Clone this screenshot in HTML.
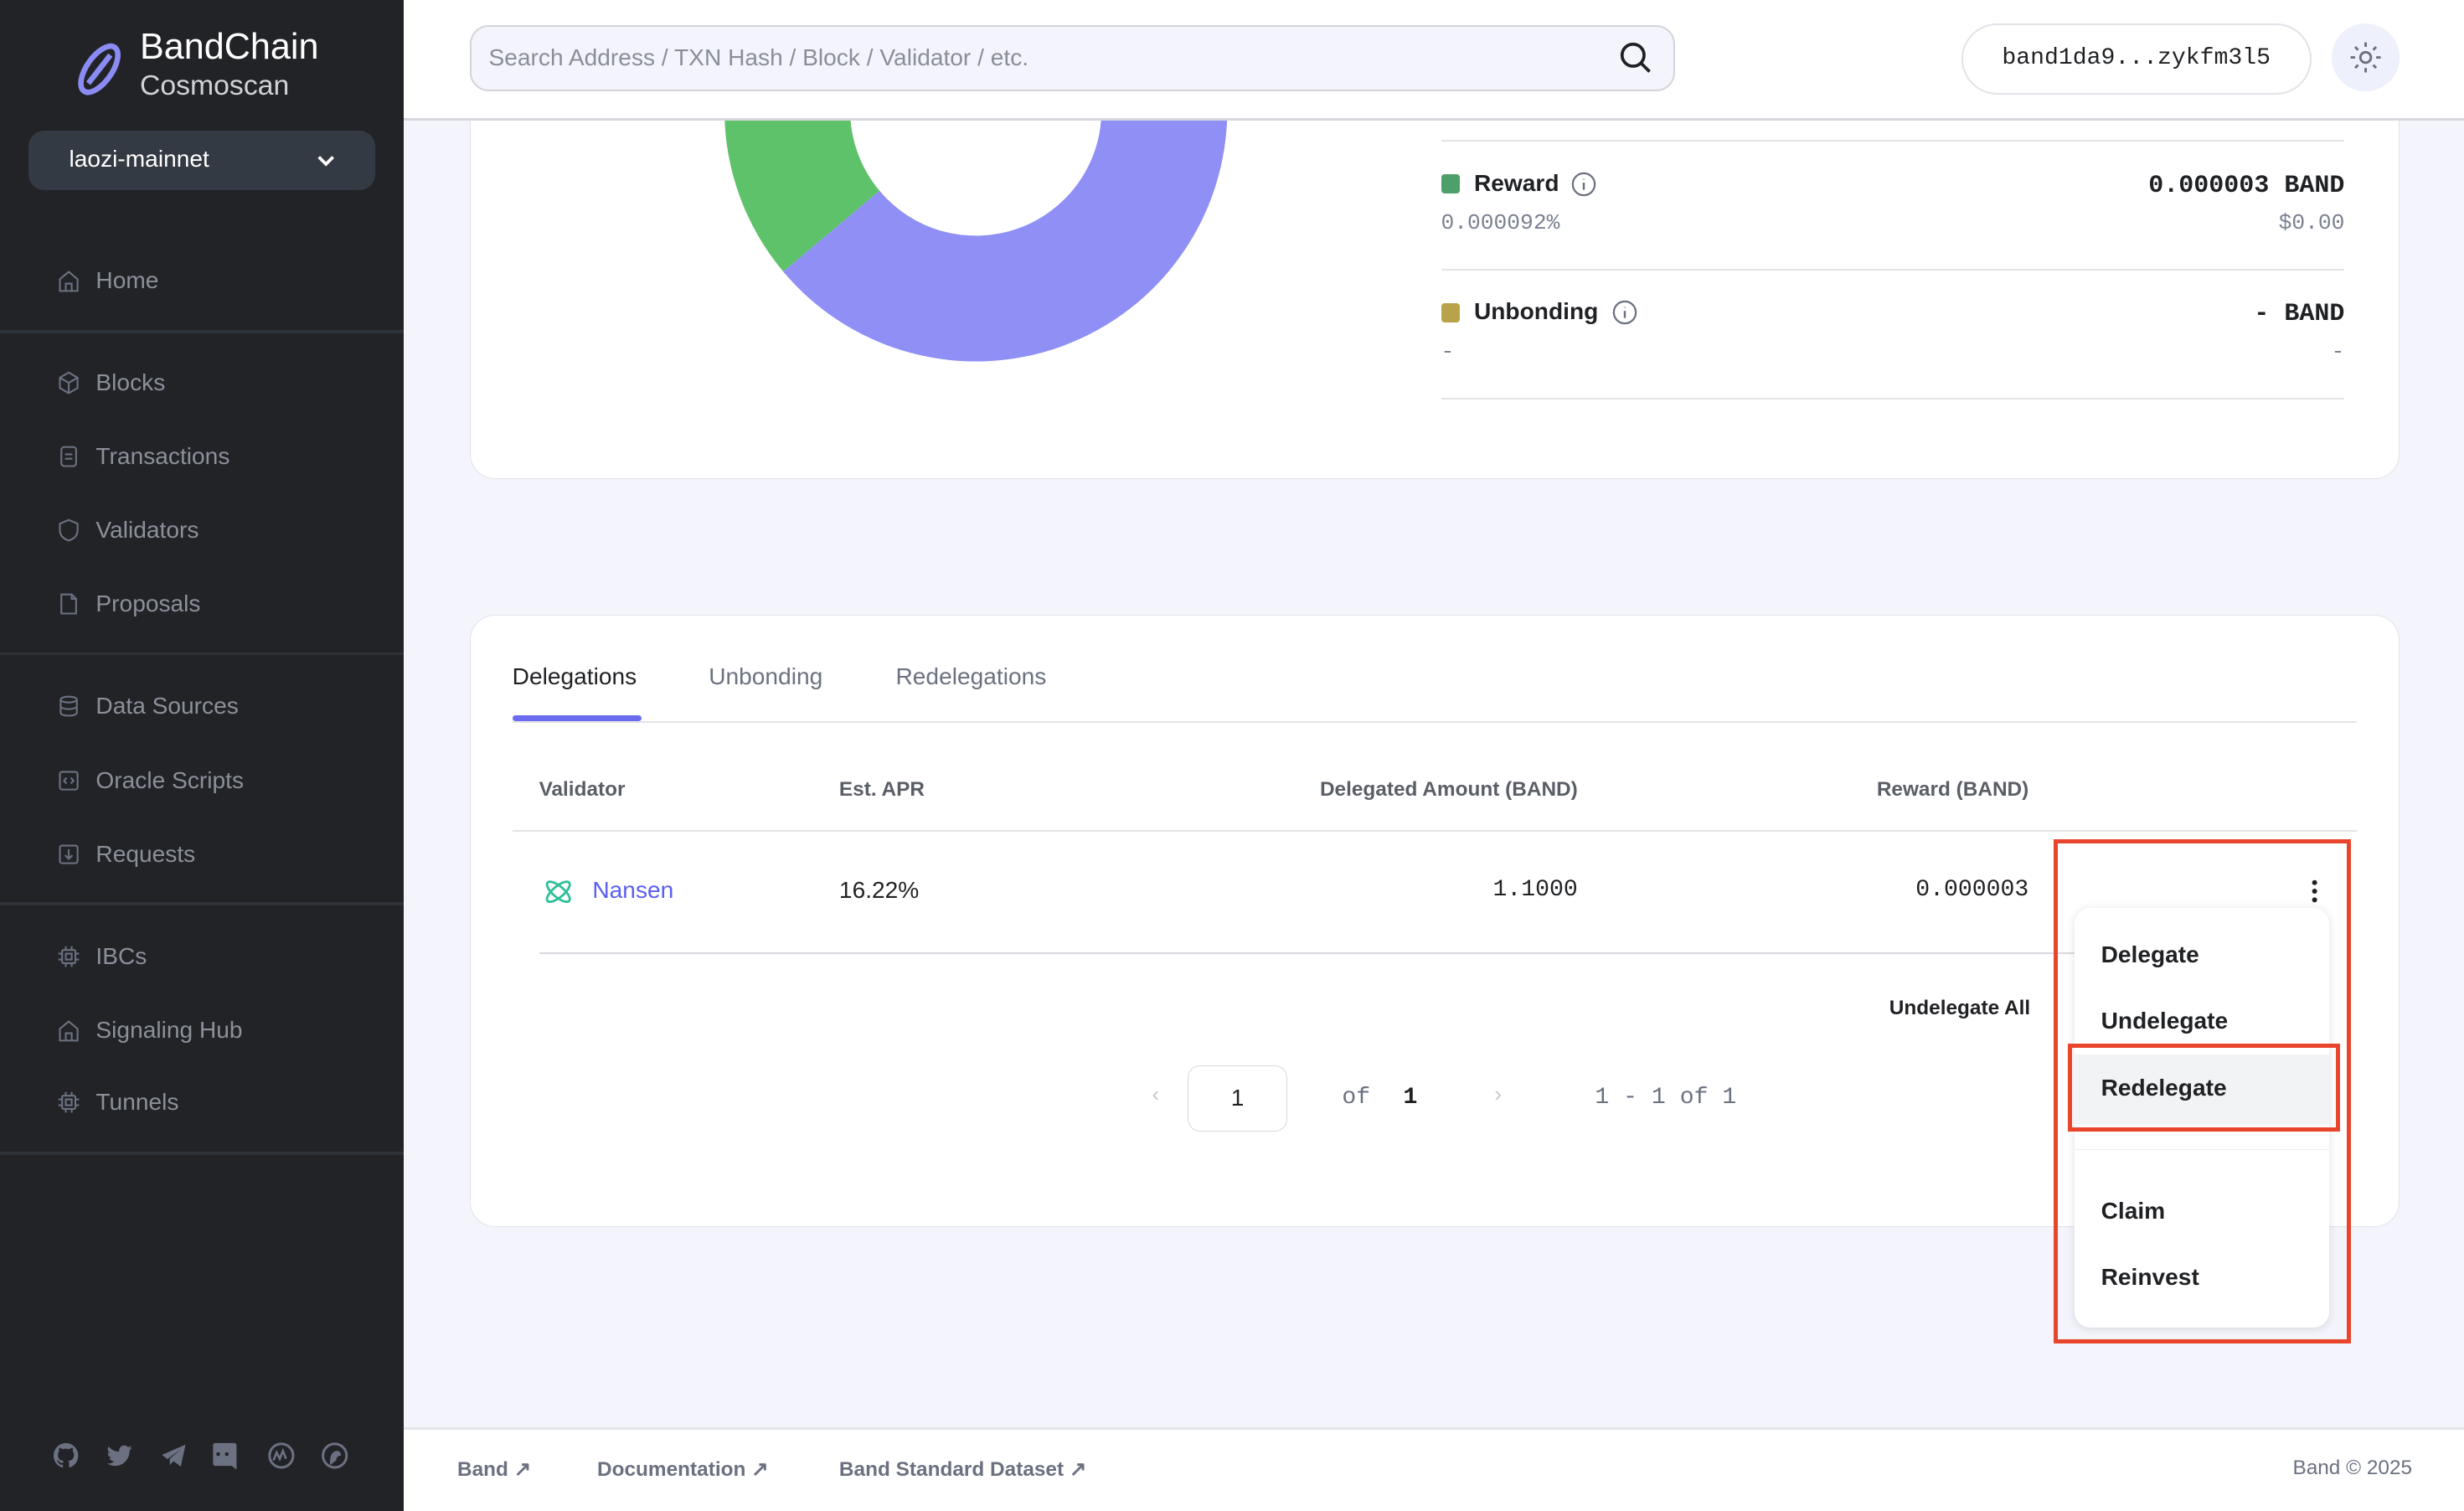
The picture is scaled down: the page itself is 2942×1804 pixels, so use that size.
<!DOCTYPE html>
<html><head><meta charset="utf-8">
<style>
*{box-sizing:border-box;margin:0;padding:0}
html,body{width:2942px;height:1804px;overflow:hidden;background:#f4f5fc}
#r{zoom:1.87628;width:1568px;height:961.5px;position:relative;font-family:"Liberation Sans",sans-serif;background:#f4f5fc;overflow:hidden}
.a{position:absolute;white-space:nowrap}
.mono{font-family:"Liberation Mono",monospace}
.sb{position:absolute;left:0;top:0;width:257px;height:962px;background:#222327}
.nav{position:absolute;left:36px;font-size:15px;color:#8b909a;display:flex;align-items:center;gap:10px}
.nav svg{width:15px;height:15px}
.div{position:absolute;left:0;width:257px;height:2px;background:#2d3138}
.card{position:absolute;background:#fff;border:1px solid #e2e3e8;border-radius:16px}
.hl{position:absolute;height:1px;background:#e3e4e8}
.th{font-size:13px;font-weight:bold;color:#5a5e66}
.dd{font-size:15px;color:#1f2124;font-weight:bold}
.fl{font-size:13px;color:#6b7180;font-weight:bold}
</style></head><body><div id="r">

<div class="card" style="left:299px;top:-40px;width:1228px;height:345px"></div>
<svg class="a" style="left:0;top:0" width="1568" height="320" viewBox="0 0 1568 320">
<g transform="translate(621,70)">
<path d="M-160,0 A160,160 0 0 0 -122.6,102.8 L-61.3,51.4 A80,80 0 0 1 -80,0 Z" fill="#5ec26a"/>
<path d="M-122.6,102.8 A160,160 0 0 0 160,0 L80,0 A80,80 0 0 1 -61.3,51.4 Z" fill="#8f8ff6"/>
</g></svg>
<div class="hl" style="left:917px;top:89px;width:575px"></div>
<div class="hl" style="left:917px;top:171px;width:575px"></div>
<div class="hl" style="left:917px;top:253px;width:575px"></div>
<div class="a" style="left:917px;top:111px;width:12px;height:12px;background:#4f9f6a;border-radius:2px"></div>
<div class="a" style="left:938px;top:108px;font-size:15px;font-weight:bold;color:#1f2124">Reward</div>
<svg class="a" style="left:1000px;top:109px" width="16" height="16" viewBox="0 0 16 16"><circle cx="8" cy="8" r="7" fill="none" stroke="#6b7180" stroke-width="1.2"/><path d="M8 7v4.5M8 4.6v.4" stroke="#6b7180" stroke-width="1.3"/></svg>
<div class="a mono" style="right:76px;top:109px;font-size:16px;font-weight:bold;color:#1f2124">0.000003 BAND</div>
<div class="a mono" style="left:917px;top:134px;font-size:14px;color:#7b8190">0.000092%</div>
<div class="a mono" style="right:76px;top:134px;font-size:14px;color:#7b8190">$0.00</div>
<div class="a" style="left:917px;top:193px;width:12px;height:12px;background:#b8a24a;border-radius:2px"></div>
<div class="a" style="left:938px;top:190px;font-size:15px;font-weight:bold;color:#1f2124">Unbonding</div>
<svg class="a" style="left:1026px;top:191px" width="16" height="16" viewBox="0 0 16 16"><circle cx="8" cy="8" r="7" fill="none" stroke="#6b7180" stroke-width="1.2"/><path d="M8 7v4.5M8 4.6v.4" stroke="#6b7180" stroke-width="1.3"/></svg>
<div class="a mono" style="right:76px;top:191px;font-size:16px;font-weight:bold;color:#1f2124">- BAND</div>
<div class="a mono" style="left:917px;top:216px;font-size:14px;color:#7b8190">-</div>
<div class="a mono" style="right:76px;top:216px;font-size:14px;color:#7b8190">-</div>

<!-- header -->
<div class="a" style="left:257px;top:0;width:1311px;height:77px;background:#fff;border-bottom:2px solid #d5d8dd"></div>
<div class="a" style="left:299px;top:16px;width:767px;height:42px;background:#f4f5fc;border:1.5px solid #d3d5da;border-radius:12px"></div>
<div class="a" style="left:311px;top:28px;font-size:15px;color:#8a8e96">Search Address / TXN Hash / Block / Validator / etc.</div>
<svg class="a" style="left:1030px;top:26px" width="21" height="21" viewBox="0 0 21 21"><circle cx="9" cy="9" r="7" fill="none" stroke="#1f2124" stroke-width="2"/><path d="M14 14l5.5 5.5" stroke="#1f2124" stroke-width="2"/></svg>
<div class="a" style="left:1248px;top:15px;width:223px;height:45px;background:#fff;border:1.5px solid #e2e3e8;border-radius:23px"></div>
<div class="a mono" style="left:1274px;top:29px;font-size:15px;color:#1f2124">band1da9...zykfm3l5</div>
<div class="a" style="left:1484px;top:15px;width:43px;height:43px;background:#eef0fb;border-radius:50%"></div>
<svg class="a" style="left:1494px;top:25px" width="23" height="23" viewBox="0 0 24 24" fill="none" stroke="#6b7180" stroke-width="1.6"><circle cx="12" cy="12" r="3.5"/><path d="M12 2v3M12 19v3M2 12h3M19 12h3M5 5l2 2M17 17l2 2M5 19l2-2M17 7l2-2"/></svg>

<!-- sidebar -->
<div class="sb"></div>
<svg class="a" style="left:44px;top:25px" width="38" height="38" viewBox="0 0 38 38" fill="none" stroke="#8a8cf4" stroke-width="3.5"><ellipse cx="19" cy="19" rx="8" ry="17" transform="rotate(35 19 19)"/><path d="M12 28 L26 10"/></svg>
<div class="a" style="left:89px;top:17px;font-size:23px;color:#fff">BandChain</div>
<div class="a" style="left:89px;top:44px;font-size:18px;color:#d0d2d6">Cosmoscan</div>
<div class="a" style="left:18px;top:83px;width:221px;height:38px;background:#343a43;border-radius:10px"></div>
<div class="a" style="left:44px;top:93px;font-size:15px;color:#fff">laozi-mainnet</div>
<svg class="a" style="left:201px;top:96px" width="13" height="13" viewBox="0 0 13 13"><path d="M2 4l4.5 4.5L11 4" fill="none" stroke="#fff" stroke-width="2"/></svg>

<div class="nav" style="top:170px"><svg viewBox="0 0 16 16" fill="none" stroke="#6b7180" stroke-width="1.2"><path d="M2 7l6-5 6 5v8H2z M6 15v-5h4v5"/></svg>Home</div>
<div class="div" style="top:210px"></div>
<div class="nav" style="top:235px"><svg viewBox="0 0 16 16" fill="none" stroke="#6b7180" stroke-width="1.2"><path d="M8 1l6 3.5v7L8 15l-6-3.5v-7z M2 4.5L8 8l6-3.5 M8 8v7"/></svg>Blocks</div>
<div class="nav" style="top:282px"><svg viewBox="0 0 16 16" fill="none" stroke="#6b7180" stroke-width="1.2"><rect x="3" y="1.5" width="10" height="13" rx="2"/><path d="M5.5 6.5h5M5.5 9.5h5"/></svg>Transactions</div>
<div class="nav" style="top:329px"><svg viewBox="0 0 16 16" fill="none" stroke="#6b7180" stroke-width="1.2"><path d="M8 1l6 2.5v4.5c0 4-3 6-6 7-3-1-6-3-6-7V3.5z"/></svg>Validators</div>
<div class="nav" style="top:376px"><svg viewBox="0 0 16 16" fill="none" stroke="#6b7180" stroke-width="1.2"><path d="M3 1.5h7l3 3v10H3z M10 1.5v3h3"/></svg>Proposals</div>
<div class="div" style="top:415px"></div>
<div class="nav" style="top:441px"><svg viewBox="0 0 16 16" fill="none" stroke="#6b7180" stroke-width="1.2"><ellipse cx="8" cy="3.5" rx="5.5" ry="2"/><path d="M2.5 3.5v9c0 1.1 2.5 2 5.5 2s5.5-.9 5.5-2v-9 M2.5 8c0 1.1 2.5 2 5.5 2s5.5-.9 5.5-2"/></svg>Data Sources</div>
<div class="nav" style="top:488px"><svg viewBox="0 0 16 16" fill="none" stroke="#6b7180" stroke-width="1.2"><rect x="2" y="2" width="12" height="12" rx="1.5"/><path d="M6.5 6L4.8 8l1.7 2M9.5 6l1.7 2-1.7 2"/></svg>Oracle Scripts</div>
<div class="nav" style="top:535px"><svg viewBox="0 0 16 16" fill="none" stroke="#6b7180" stroke-width="1.2"><rect x="2" y="2" width="12" height="12" rx="1.5"/><path d="M8 4.5v6M5.5 8.5L8 11l2.5-2.5"/></svg>Requests</div>
<div class="div" style="top:574px"></div>
<div class="nav" style="top:600px"><svg viewBox="0 0 16 16" fill="none" stroke="#6b7180" stroke-width="1.2"><rect x="3.5" y="3.5" width="9" height="9" rx="1"/><rect x="6" y="6" width="4" height="4"/><path d="M6 1v2.5M10 1v2.5M6 12.5V15M10 12.5V15M1 6h2.5M1 10h2.5M12.5 6H15M12.5 10H15"/></svg>IBCs</div>
<div class="nav" style="top:647px"><svg viewBox="0 0 16 16" fill="none" stroke="#6b7180" stroke-width="1.2"><path d="M2 7l6-5 6 5v8H2z M6 15v-5h4v5"/></svg>Signaling Hub</div>
<div class="nav" style="top:693px"><svg viewBox="0 0 16 16" fill="none" stroke="#6b7180" stroke-width="1.2"><rect x="3.5" y="3.5" width="9" height="9" rx="1"/><rect x="6" y="6" width="4" height="4"/><path d="M6 1v2.5M10 1v2.5M6 12.5V15M10 12.5V15M1 6h2.5M1 10h2.5M12.5 6H15M12.5 10H15"/></svg>Tunnels</div>
<div class="div" style="top:733px"></div>

<svg class="a" style="left:33px;top:917px" width="192" height="18" viewBox="0 0 192 18" fill="#6b7180">
<path d="M9 1a8 8 0 0 0-2.5 15.6c.4 0 .5-.2.5-.4v-1.5c-2.2.5-2.7-1-2.7-1-.4-.9-.9-1.2-.9-1.2-.7-.5.1-.5.1-.5.8.1 1.2.8 1.2.8.7 1.2 1.9.9 2.3.7.1-.5.3-.9.5-1.1-1.8-.2-3.7-.9-3.7-4 0-.9.3-1.6.8-2.2-.1-.2-.4-1 .1-2.1 0 0 .7-.2 2.2.8a7.6 7.6 0 0 1 4 0c1.5-1 2.2-.8 2.2-.8.4 1.1.2 1.9.1 2.1.5.6.8 1.3.8 2.2 0 3.1-1.9 3.8-3.7 4 .3.3.6.8.6 1.5v2.2c0 .2.1.5.6.4A8 8 0 0 0 9 1z"/>
<path d="M51 4c-.6.3-1.2.4-1.9.5.7-.4 1.2-1 1.4-1.8-.6.4-1.3.6-2.1.8a3.3 3.3 0 0 0-5.6 3A9.3 9.3 0 0 1 36 3.1a3.3 3.3 0 0 0 1 4.4c-.5 0-1-.2-1.5-.4 0 1.6 1.1 2.9 2.6 3.2-.5.1-1 .2-1.5.1.4 1.3 1.6 2.3 3.1 2.3A6.6 6.6 0 0 1 35 14c1.5.9 3.2 1.5 5 1.5 6.1 0 9.4-5 9.4-9.4v-.4c.7-.5 1.2-1.1 1.6-1.7z"/>
<path d="M70 8.5L85 2l-3 14-4.5-3.5-2.5 2.5v-4L82 5l-8.5 6.2z"/>
<path d="M104 1h12a1.5 1.5 0 0 1 1.5 1.5V18l-3-2.5H104a1.5 1.5 0 0 1-1.5-1.5V2.5A1.5 1.5 0 0 1 104 1zm3 7a1.2 1.2 0 1 0 0 .1zm5.5 0a1.2 1.2 0 1 0 0 .1z"/>
<circle cx="146" cy="9" r="7.5" fill="none" stroke="#6b7180" stroke-width="1.6"/><path d="M141 12l2-5 2 4 2-5 2 5" fill="none" stroke="#6b7180" stroke-width="1.4"/>
<circle cx="180" cy="9" r="7.5" fill="none" stroke="#6b7180" stroke-width="1.6"/><path d="M177 15c0-4 0-8 4-9 2 0 3 1 3 3-2 0-3 1-3 3z"/>
</svg>

<!-- card2 -->
<div class="card" style="left:299px;top:391px;width:1228px;height:390px"></div>
<div class="a" style="left:326px;top:422px;font-size:15px;color:#1f2124">Delegations</div>
<div class="a" style="left:451px;top:422px;font-size:15px;color:#6b7180">Unbonding</div>
<div class="a" style="left:570px;top:422px;font-size:15px;color:#6b7180">Redelegations</div>
<div class="hl" style="left:326px;top:459px;width:1174px"></div>
<div class="a" style="left:326px;top:455px;width:82px;height:4px;background:#6c6cf0;border-radius:2px"></div>
<div class="a th" style="left:343px;top:495px">Validator</div>
<div class="a th" style="left:534px;top:495px">Est. APR</div>
<div class="a th" style="right:564px;top:495px">Delegated Amount (BAND)</div>
<div class="a th" style="right:277px;top:495px">Reward (BAND)</div>
<div class="hl" style="left:326px;top:528px;width:1174px"></div>
<svg class="a" style="left:345px;top:557px" width="21" height="21" viewBox="0 0 21 21" fill="none" stroke="#2fbf9a" stroke-width="1.5"><ellipse cx="10.5" cy="10.5" rx="9" ry="3.5" transform="rotate(-40 10.5 10.5)"/><ellipse cx="10.5" cy="10.5" rx="9" ry="3.5" transform="rotate(40 10.5 10.5)"/></svg>
<div class="a" style="left:377px;top:558px;font-size:15px;color:#5a5ff0">Nansen</div>
<div class="a" style="left:534px;top:558px;font-size:15px;color:#1f2124">16.22%</div>
<div class="a mono" style="right:564px;top:558px;font-size:15px;color:#1f2124">1.1000</div>
<div class="a mono" style="right:277px;top:558px;font-size:15px;color:#1f2124">0.000003</div>
<svg class="a" style="left:1470px;top:559px" width="6" height="16"><circle cx="3" cy="2.5" r="1.6" fill="#1f2124"/><circle cx="3" cy="8" r="1.6" fill="#1f2124"/><circle cx="3" cy="13.5" r="1.6" fill="#1f2124"/></svg>
<div class="hl" style="left:343px;top:606px;width:980px;background:#d8dadf"></div>
<div class="a" style="right:276px;top:634px;font-size:13px;font-weight:bold;color:#1f2124">Undelegate All</div>
<div class="a" style="left:733px;top:688px;font-size:14px;color:#c5c8ce">‹</div>
<div class="a" style="left:756px;top:678px;width:63px;height:42px;border:1px solid #d6d8dd;border-radius:8px;font-size:15px;text-align:center;line-height:40px;color:#1f2124">1</div>
<div class="a mono" style="left:854px;top:690px;font-size:15px;color:#6b7180">of</div>
<div class="a mono" style="left:893px;top:690px;font-size:15px;font-weight:bold;color:#1f2124">1</div>
<div class="a" style="left:951px;top:688px;font-size:14px;color:#c5c8ce">›</div>
<div class="a mono" style="left:1015px;top:690px;font-size:15px;color:#6b7180">1 - 1 of 1</div>

<!-- dropdown -->
<div class="a" style="left:1320px;top:578px;width:162px;height:267px;background:#fff;border-radius:10px;box-shadow:0 1px 6px rgba(0,0,0,.12)"></div>
<div class="a" style="left:1320px;top:671px;width:162px;height:45px;background:#f2f3f5"></div>
<div class="a" style="left:1320px;top:731px;width:162px;height:1px;background:#eeeff1"></div>
<div class="a dd" style="left:1337px;top:599px">Delegate</div>
<div class="a dd" style="left:1337px;top:641px">Undelegate</div>
<div class="a dd" style="left:1337px;top:684px">Redelegate</div>
<div class="a dd" style="left:1337px;top:762px">Claim</div>
<div class="a dd" style="left:1337px;top:804px">Reinvest</div>
<div class="a" style="left:1307px;top:534px;width:189px;height:321px;border:3px solid #e8452c"></div>
<div class="a" style="left:1316px;top:664px;width:173px;height:56px;border:3px solid #e8452c"></div>

<!-- footer -->
<div class="a" style="left:257px;top:908px;width:1311px;height:54px;background:#fff;border-top:2px solid #e5e6ea"></div>
<div class="a fl" style="left:291px;top:927px">Band ↗</div>
<div class="a fl" style="left:380px;top:927px">Documentation ↗</div>
<div class="a fl" style="left:534px;top:927px">Band Standard Dataset ↗</div>
<div class="a fl" style="right:33px;top:927px;font-weight:normal">Band © 2025</div>
</div></body></html>
